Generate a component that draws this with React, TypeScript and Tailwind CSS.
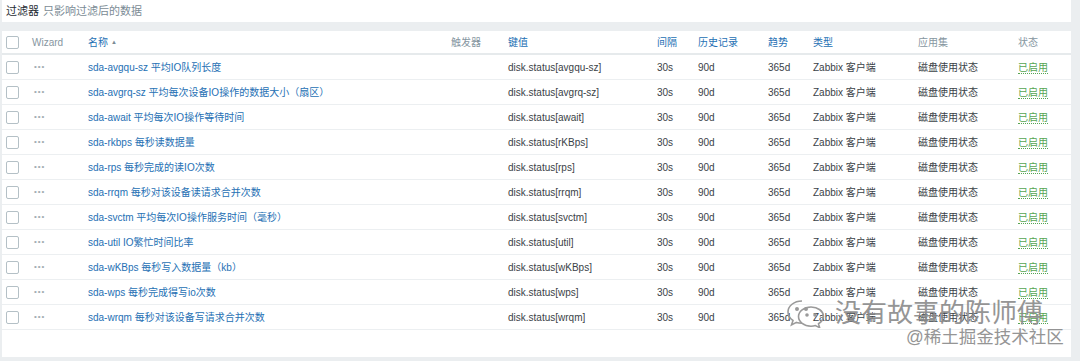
import React from "react";

type Item = {
  name: string;
  key: string;
};

const items: Item[] = [
  { name: "sda-avgqu-sz 平均IO队列长度", key: "disk.status[avgqu-sz]" },
  { name: "sda-avgrq-sz 平均每次设备IO操作的数据大小（扇区）", key: "disk.status[avgrq-sz]" },
  { name: "sda-await 平均每次IO操作等待时间", key: "disk.status[await]" },
  { name: "sda-rkbps 每秒读数据量", key: "disk.status[rKBps]" },
  { name: "sda-rps 每秒完成的读IO次数", key: "disk.status[rps]" },
  { name: "sda-rrqm 每秒对该设备读请求合并次数", key: "disk.status[rrqm]" },
  { name: "sda-svctm 平均每次IO操作服务时间（毫秒）", key: "disk.status[svctm]" },
  { name: "sda-util IO繁忙时间比率", key: "disk.status[util]" },
  { name: "sda-wKBps 每秒写入数据量（kb）", key: "disk.status[wKBps]" },
  { name: "sda-wps 每秒完成得写io次数", key: "disk.status[wps]" },
  { name: "sda-wrqm 每秒对该设备写请求合并次数", key: "disk.status[wrqm]" },
];

const cols =
  "grid grid-cols-[26px_56px_316px_104px_149px_41px_70px_45px_105px_100px_57px]";

function CheckBox() {
  return <div className="w-[13px] h-[13px] border border-[#b4c0c6] rounded-[2px] bg-white" />;
}

function WeChatMark() {
  return (
    <svg width="46" height="30" viewBox="0 0 46 30" fill="none" stroke="#9a9a9a" strokeWidth="1.6">
      <path d="M17 3C9 3 3 8 3 14c0 3.5 2 6.5 5 8.5L6.5 27l5-2.6c1.7.5 3.5.7 5.5.7" />
      <path d="M26 9c-7 0-12.5 4.3-12.5 9.6S19 28.2 26 28.2c1.6 0 3-.2 4.4-.6l4.2 2-1.1-3.8c2.9-1.8 4.9-4.6 4.9-7.7C38.4 13.3 33 9 26 9z" />
      <circle cx="12" cy="11" r="1.2" fill="#9a9a9a" />
      <circle cx="21" cy="11" r="1.2" fill="#9a9a9a" />
      <circle cx="22" cy="17" r="1" fill="#9a9a9a" />
      <circle cx="30" cy="17" r="1" fill="#9a9a9a" />
    </svg>
  );
}

export default function App() {
  return (
    <div
      className="relative w-[1080px] h-[361px] bg-[#ebeef0] overflow-hidden text-[10px] text-[#3a4247]"
      style={{ fontFamily: '"Liberation Sans", Arial, "Noto Sans CJK SC", sans-serif' }}
    >
      {/* filter bar */}
      <div className="ml-[2px] w-[1069px] h-[22px] bg-white flex items-center pl-[4px] text-[11px]">
        <span className="text-[#1f2c33]">过滤器</span>
        <span className="ml-[4px] text-[#7b8b95]">只影响过滤后的数据</span>
      </div>

      {/* list panel */}
      <div className="ml-[2px] mt-[9px] w-[1069px] h-[326px] bg-white">
        <div className={`${cols} h-[24px] items-center border-b-2 border-[#e6eaec]`}>
          <div className="pl-[4px]">
            <CheckBox />
          </div>
          <div className="pl-[4px] text-[#86969f]">Wizard</div>
          <div className="pl-[4px] text-[#2570b4] flex items-center gap-[3px]">
            名称<span className="text-[6px] text-[#7b8b95]">▲</span>
          </div>
          <div className="pr-[23px] text-right text-[#86969f]">触发器</div>
          <div className="pl-[4px] text-[#2570b4]">键值</div>
          <div className="pl-[4px] text-[#2570b4]">间隔</div>
          <div className="pl-[4px] text-[#2570b4]">历史记录</div>
          <div className="pl-[4px] text-[#2570b4]">趋势</div>
          <div className="pl-[4px] text-[#2570b4]">类型</div>
          <div className="pl-[4px] text-[#86969f]">应用集</div>
          <div className="pl-[4px] text-[#86969f]">状态</div>
        </div>
        {items.map((item) => (
          <div key={item.key} className={`${cols} h-[25px] items-center border-b border-[#eceff1]`}>
            <div className="pl-[4px]">
              <CheckBox />
            </div>
            <div className="pl-[6px] text-[#a3adb2] tracking-[1px] text-[8px]">•••</div>
            <div className="pl-[4px] text-[#2570b4] whitespace-nowrap">{item.name}</div>
            <div />
            <div className="pl-[4px]">{item.key}</div>
            <div className="pl-[4px]">30s</div>
            <div className="pl-[4px]">90d</div>
            <div className="pl-[4px]">365d</div>
            <div className="pl-[4px] whitespace-nowrap">Zabbix 客户端</div>
            <div className="pl-[4px]">磁盘使用状态</div>
            <div className="pl-[4px]">
              <span className="text-[#55a552] border-b border-dotted border-[#55a552]">已启用</span>
            </div>
          </div>
        ))}
      </div>

      {/* watermark overlay */}
      <div className="absolute left-[785px] top-[298px] flex items-center gap-[4px]">
        <WeChatMark />
        <span className="text-[26px] leading-none text-[#8a8a8a] opacity-90 whitespace-nowrap">没有故事的陈师傅</span>
      </div>
      <div className="absolute left-[906px] top-[329px] text-[17.5px] leading-none text-[#8a8a8a] opacity-90 whitespace-nowrap">
        @稀土掘金技术社区
      </div>
    </div>
  );
}
